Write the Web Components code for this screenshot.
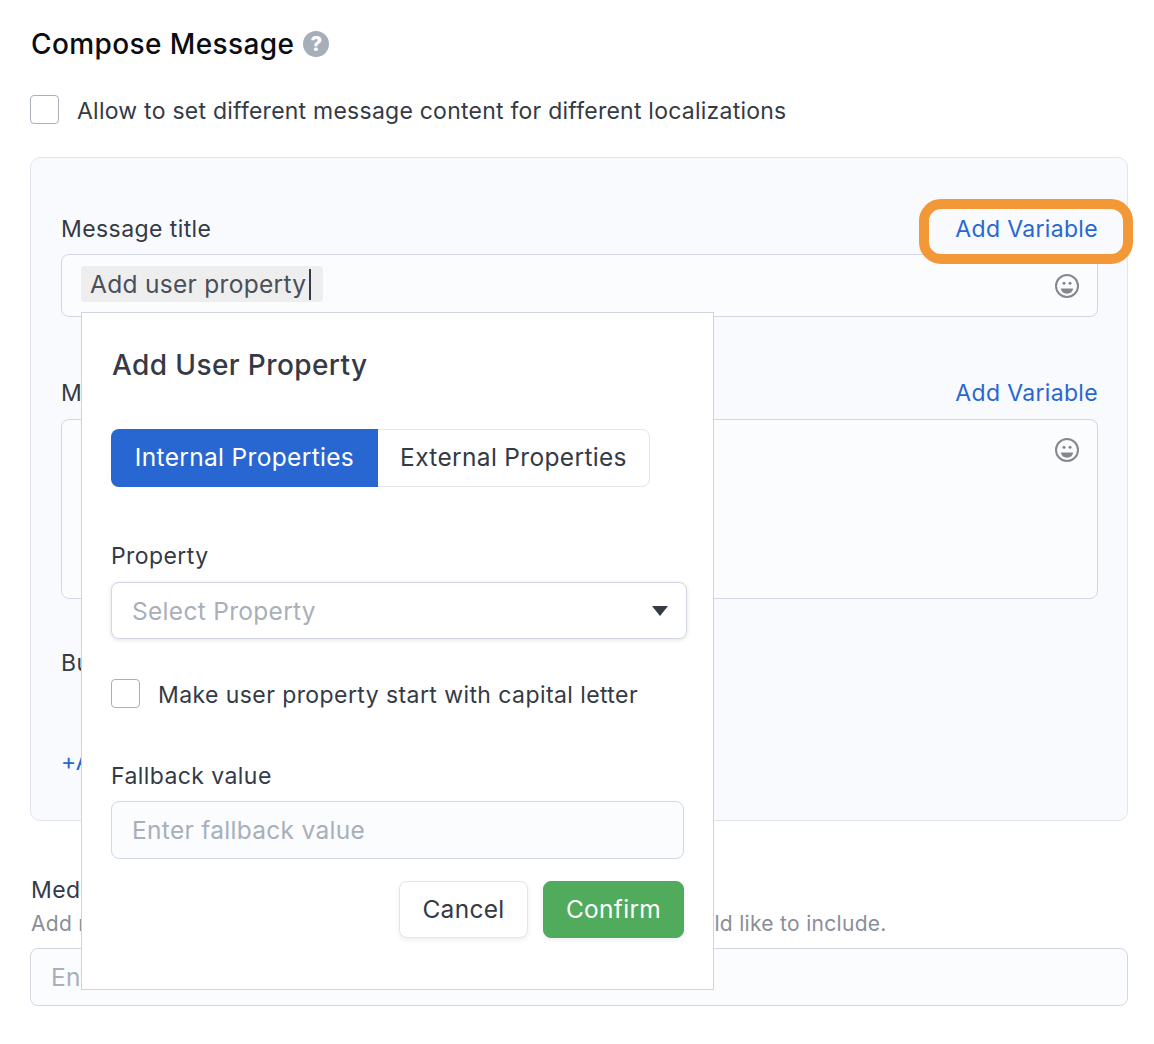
<!DOCTYPE html>
<html>
<head>
<meta charset="utf-8">
<title>Compose Message</title>
<style>
  html, body { margin: 0; background: #fff; }
  body { font-family: Inter, "Noto Sans", sans-serif; color: #343a46; }
</style>
</head>
<body>
<compose-page></compose-page>

<script>
// shared little bits of css
const FONT = 'font-family: Inter, "Noto Sans", sans-serif;';

class SmileIcon extends HTMLElement {
  constructor() {
    super();
    let shadow = this.attachShadow({mode: 'open'});
    shadow.innerHTML = '<style>:host { display: block; width: 26px; height: 26px; } svg { display: block; }</style>' +
      '<svg width="26" height="26" viewBox="0 0 26 26">' +
      '<circle cx="13" cy="13" r="11" fill="none" stroke="#85878d" stroke-width="2"/>' +
      '<circle cx="10" cy="10.3" r="1.5" fill="#85878d"/>' +
      '<circle cx="16" cy="10.3" r="1.5" fill="#85878d"/>' +
      '<path d="M6.8 15.6 H19.2 C18.6 19 16.2 20.8 13 20.8 C9.8 20.8 7.4 19 6.8 15.6 Z" fill="#85878d"/>' +
      '</svg>';
  }
}
customElements.define('smile-icon', SmileIcon);

class HelpIcon extends HTMLElement {
  constructor() {
    super();
    let shadow = this.attachShadow({mode: 'open'});
    shadow.innerHTML = '<style>' + ':host { display: flex; width: 26px; height: 26px; border-radius: 50%; background: #a6aeba;' +
      ' color: #fff; align-items: center; justify-content: center; font-size: 20px; font-weight: 800; line-height: 1; letter-spacing: 0; ' + FONT + ' }' +
      '</style>?';
  }
}
customElements.define('help-icon', HelpIcon);

class CheckRow extends HTMLElement {
  constructor() {
    super();
    let shadow = this.attachShadow({mode: 'open'});
    shadow.innerHTML = '<style>' +
      ':host { display: flex; align-items: center; gap: 18px; height: 29px; font-size: 23px; letter-spacing: .24px; color: #343a46; }' +
      '.box { box-sizing: border-box; width: 29px; height: 29px; border: 1px solid #a9afbe; border-radius: 4px; background: #fff; }' +
      '.txt { padding-top: 3px; }' +
      '</style><span class="box"></span><span class="txt"><slot></slot></span>';
  }
}
customElements.define('check-row', CheckRow);

// label + optional "Add Variable" link on the right
class FieldHead extends HTMLElement {
  constructor() {
    super();
    let shadow = this.attachShadow({mode: 'open'});
    shadow.innerHTML = '<style>' +
      ':host { display: flex; justify-content: space-between; align-items: center; height: 30px; font-size: 23px; letter-spacing: .42px; color: #343a46; }' +
      '.link { color: #2867d2; letter-spacing: .33px; }' +
      '</style><span><slot></slot></span><span class="link"><slot name="link"></slot></span>';
  }
}
customElements.define('field-head', FieldHead);

class TextBox extends HTMLElement {
  constructor() {
    super();
    let shadow = this.attachShadow({mode: 'open'});
    shadow.innerHTML = '<style>' +
      ':host { display: flex; box-sizing: border-box; align-items: center; justify-content: space-between; padding: 0 20px;' +
      ' border: 1px solid #d3d7e5; border-radius: 8px; background: #fbfcfe; font-size: 24.5px; letter-spacing: .3px; color: #a9afba; }' +
      '</style><slot></slot>';
  }
}
customElements.define('text-box', TextBox);

class AppButton extends HTMLElement {
  constructor() {
    super();
    let shadow = this.attachShadow({mode: 'open'});
    shadow.innerHTML = '<style>' +
      ':host { display: flex; box-sizing: border-box; height: 57px; padding-bottom: 2px; align-items: center; justify-content: center;' +
      ' border: 1px solid #e3e5ea; border-radius: 8px; background: #fff; color: #343a46; font-size: 24.5px; letter-spacing: .3px;' +
      ' box-shadow: 0 2px 5px rgba(30, 40, 60, .08); }' +
      ':host([primary]) { background: #50ab5d; border-color: #50ab5d; color: #fff; }' +
      '</style><slot></slot>';
  }
}
customElements.define('app-button', AppButton);

class SegTabs extends HTMLElement {
  constructor() {
    super();
    let shadow = this.attachShadow({mode: 'open'});
    shadow.innerHTML = '<style>' +
      ':host { display: flex; box-sizing: border-box; width: 539px; height: 58px; border: 1px solid #e3e5ea; border-radius: 8px; background: #fff; font-size: 24.5px; letter-spacing: .33px; color: #343a46; }' +
      'span { display: flex; align-items: center; justify-content: center; padding-bottom: 2px; }' +
      '.on { width: 267px; margin: -1px 0 -1px -1px; border-radius: 8px 0 0 8px; background: #2867d2; color: #fff; }' +
      '.off { flex: 1; }' +
      '</style><span class="on">Internal Properties</span><span class="off">External Properties</span>';
  }
}
customElements.define('seg-tabs', SegTabs);

class PropertyPopover extends HTMLElement {
  constructor() {
    super();
    let shadow = this.attachShadow({mode: 'open'});
    shadow.innerHTML = '<style>' +
      ':host { position: absolute; left: 81px; top: 312px; box-sizing: border-box; width: 633px; height: 678px;' +
      ' padding: 32px 29px 0 29px; background: #fff; border: 1px solid #d0d3de; color: #343a46; }' +
      'h2 { margin: 0 0 0 1px; height: 40px; line-height: 40px; font-size: 28px; font-weight: 500; letter-spacing: .4px; }' +
      'seg-tabs { margin-top: 44px; }' +
      '.first { margin-top: 54px; }' +
      '.select { margin-top: 11px; width: 576px; height: 57px; background: #fff; box-shadow: 0 1px 4px rgba(40, 50, 80, .14); }' +
      '.arrow { width: 0; height: 0; border-left: 8px solid transparent; border-right: 8px solid transparent; border-top: 10px solid #343a46; margin-right: -2px; }' +
      'check-row { margin-top: 40px; letter-spacing: .42px; }' +
      '.second { margin-top: 53px; }' +
      '.input { margin-top: 10px; width: 573px; height: 58px; }' +
      '.actions { display: flex; justify-content: flex-end; gap: 15px; margin-top: 22px; width: 573px; }' +
      '.cancel { width: 129px; } .confirm { width: 141px; }' +
      '</style>' +
      '<h2>Add User Property</h2>' +
      '<seg-tabs></seg-tabs>' +
      '<field-head class="first">Property</field-head>' +
      '<text-box class="select"><span>Select Property</span><span class="arrow"></span></text-box>' +
      '<check-row>Make user property start with capital letter</check-row>' +
      '<field-head class="second">Fallback value</field-head>' +
      '<text-box class="input"><span>Enter fallback value</span></text-box>' +
      '<div class="actions"><app-button class="cancel">Cancel</app-button><app-button class="confirm" primary>Confirm</app-button></div>';
  }
}
customElements.define('property-popover', PropertyPopover);

class ComposePage extends HTMLElement {
  constructor() {
    super();
    let shadow = this.attachShadow({mode: 'open'});
    shadow.innerHTML = '<style>' +
      ':host { display: block; position: relative; box-sizing: border-box; width: 1154px; height: 1044px; padding: 24px 26px 0 30px; overflow: hidden; ' + FONT + ' color: #343a46; }' +
      'h1 { display: flex; align-items: center; gap: 9px; margin: 0 0 0 1px; height: 40px; font-size: 28px; font-weight: 500; letter-spacing: .4px; color: #0b0d12; }' +
      '.top-check { margin-top: 31px; }' +
      '.panel { box-sizing: border-box; height: 664px; margin-top: 33px; padding: 56px 29px 0 30px; background: #f9fafe; border: 1px solid #e2e5ee; border-radius: 10px; }' +
      '.title-box { height: 63px; margin-top: 10px; padding: 0 17px 0 19px; background: #fbfcfe; }' +
      '.chip { display: flex; align-items: center; height: 36px; margin-top: -3px; padding: 0 12px 0 9px; border-radius: 3px; background: #eeeeee; color: #4a4f59; }' +
      '.caret { width: 2px; height: 31px; margin-left: 3px; background: #343a46; }' +
      '.second-head { margin-top: 61px; }' +
      '.body-box { height: 180px; margin-top: 11px; padding: 17px 17px 0 19px; align-items: flex-start; justify-content: flex-end; }' +
      '.buttons-head { margin-top: 49px; }' +
      '.add { margin-top: 69px; height: 30px; line-height: 30px; font-size: 23px; letter-spacing: .42px; color: #2867d2; }' +
      '.media-head { margin-top: 54px; margin-left: 1px; }' +
      '.note { margin: 4px 0 0 1px; height: 29px; line-height: 30px; font-size: 21px; letter-spacing: .3px; color: #8a8e97; }' +
      '.media-box { height: 58px; margin-top: 10px; }' +
      '.ring { position: absolute; left: 919px; top: 199px; box-sizing: border-box; width: 214px; height: 65px; border: 10px solid #f39837; border-radius: 22px; }' +
      '</style>' +
      '<h1><span>Compose Message</span><help-icon></help-icon></h1>' +
      '<check-row class="top-check">Allow to set different message content for different localizations</check-row>' +
      '<section class="panel">' +
        '<field-head>Message title<span slot="link">Add Variable</span></field-head>' +
        '<text-box class="title-box"><span class="chip">Add user property<span class="caret"></span></span><smile-icon></smile-icon></text-box>' +
        '<field-head class="second-head">Message body<span slot="link">Add Variable</span></field-head>' +
        '<text-box class="body-box"><smile-icon></smile-icon></text-box>' +
        '<field-head class="buttons-head">Buttons</field-head>' +
        '<div class="add">+Add</div>' +
      '</section>' +
      '<field-head class="media-head">Media</field-head>' +
      '<div class="note">Add media to your message, such as an image or video, if you would like to include.</div>' +
      '<text-box class="media-box"><span>Enter media URL</span></text-box>' +
      '<div class="ring"></div>' +
      '<property-popover></property-popover>';
  }
}
customElements.define('compose-page', ComposePage);
</script>
</body>
</html>
